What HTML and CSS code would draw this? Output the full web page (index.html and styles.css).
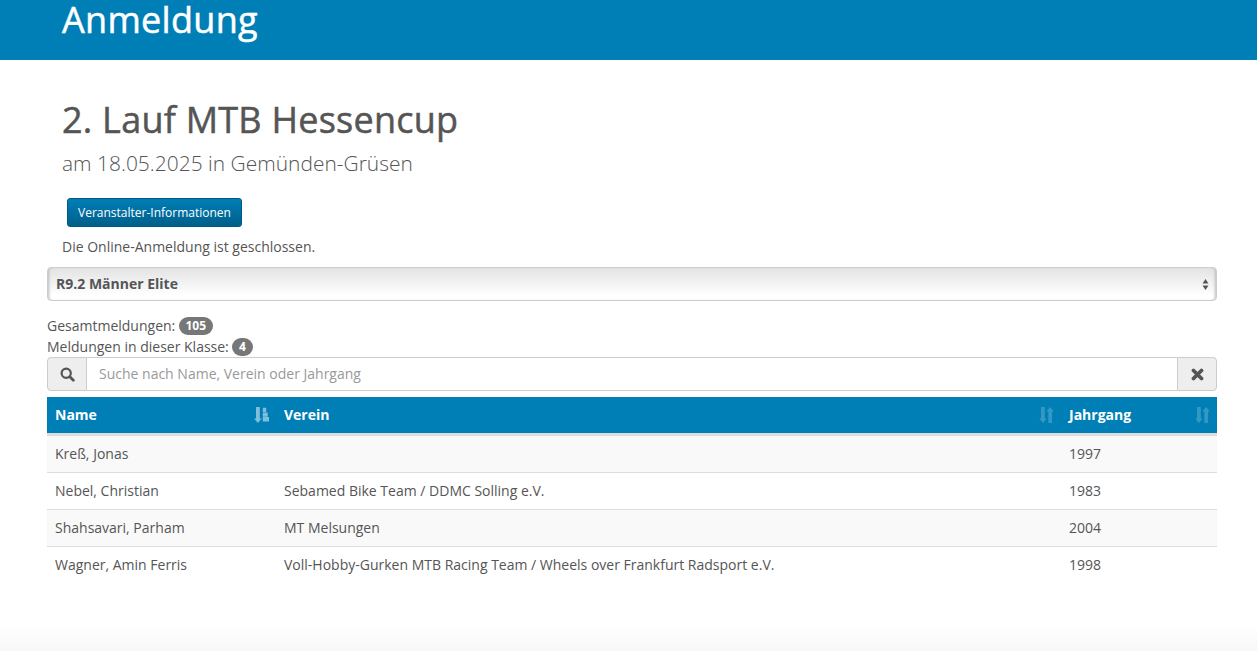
FILE: index.html
```html
<!DOCTYPE html>
<html lang="de">
<head>
<meta charset="utf-8">
<title>Anmeldung</title>
<link rel="stylesheet" href="styles.css">
</head>
<body>
<header class="topbar"><h1 class="topbar-title">Anmeldung</h1></header>
<main class="content">
  <div class="intro">
    <h2 class="event-title">2. Lauf MTB Hessencup</h2>
    <p class="event-sub">am 18.05.2025 in Gemünden-Grüsen</p>
    <a class="btn" href="#">Veranstalter-Informationen</a>
    <p class="closed">Die Online-Anmeldung ist geschlossen.</p>
  </div>
  <div class="select">
    <span>R9.2 Männer Elite</span>
    <svg class="select-arrows" width="7" height="13" viewBox="0 0 7 13"><path d="M3.5 1 6.5 5.500H.5zM.5 7.500h6L3.500 12z" fill="#555"/></svg>
  </div>
  <div class="counts">
    <div class="count-row">Gesamtmeldungen: <span class="badge">105</span></div>
    <div class="count-row">Meldungen in dieser Klasse: <span class="badge">4</span></div>
  </div>
  <div class="search">
    <span class="addon addon-left">
      <svg width="15" height="15" viewBox="0 0 15 15"><circle cx="6.200" cy="6.200" r="4.600" fill="none" stroke="#555" stroke-width="2.200"/><path d="M9.800 9.800 13.300 13.300" stroke="#555" stroke-width="2.800" stroke-linecap="round"/></svg>
    </span>
    <span class="search-input">Suche nach Name, Verein oder Jahrgang</span>
    <span class="addon addon-right">
      <svg width="13" height="13" viewBox="0 0 13 13"><path d="M2.500 2.500 10.500 10.500M10.500 2.500 2.500 10.500" stroke="#555" stroke-width="3.800" stroke-linecap="round"/></svg>
    </span>
  </div>
  <table class="results">
    <colgroup><col class="col-name"><col class="col-club"><col class="col-year"></colgroup>
    <thead>
      <tr>
        <th><div class="th-inner">Name
          <svg class="sort sort-active" width="15" height="16" viewBox="0 0 15 16"><path d="M2 0h3.800v11.500h1.900L3.900 16 .1 11.500H2zM8.800.8h3.400v4.200H8.800zM8.800 5.400h4.900v4.300H8.800zM8.800 10.100H15v4.400H8.800z"/></svg>
        </div></th>
        <th><div class="th-inner">Verein
          <svg class="sort" width="15" height="16" viewBox="0 0 15 16"><path d="M2 0h3.800v11.500h1.900L3.900 16 .1 11.500H2zM11.100 0 15 4.500h-1.900V16H9.300V4.500H7.300z"/></svg>
        </div></th>
        <th><div class="th-inner">Jahrgang
          <svg class="sort" width="15" height="16" viewBox="0 0 15 16"><path d="M2 0h3.800v11.500h1.900L3.900 16 .1 11.500H2zM11.100 0 15 4.500h-1.900V16H9.300V4.500H7.300z"/></svg>
        </div></th>
      </tr>
    </thead>
    <tbody>
      <tr><td>Kreß, Jonas</td><td></td><td>1997</td></tr>
      <tr><td>Nebel, Christian</td><td>Sebamed Bike Team / DDMC Solling e.V.</td><td>1983</td></tr>
      <tr><td>Shahsavari, Parham</td><td>MT Melsungen</td><td>2004</td></tr>
      <tr><td>Wagner, Amin Ferris</td><td>Voll-Hobby-Gurken MTB Racing Team / Wheels over Frankfurt Radsport e.V.</td><td>1998</td></tr>
    </tbody>
  </table>
</main>
<div class="page-fade"></div>
</body>
</html>
```
FILE: styles.css
```css
* { box-sizing: border-box; }
html, body { height: 100%; }
body {
  margin: 0;
  overflow: hidden;
  position: relative;
  background: #fff;
  color: #555;
  font-family: "Open Sans", sans-serif;
  font-size: 14px;
  line-height: 20px;
}
.topbar {
  height: 60px;
  background: #007eb6;
  padding-left: 62px;
}
.topbar-title {
  margin: 0;
  color: #fff;
  font-size: 36px;
  font-weight: 400;
  letter-spacing: .3px;
  line-height: 40px;
  -webkit-text-stroke: .5px #fff;
}
.content { padding: 33px 40px 0 47px; }
.intro { padding-left: 15px; }
.event-title {
  margin: 0;
  font-size: 36px;
  font-weight: 400;
  letter-spacing: .24px;
  line-height: 54px;
  -webkit-text-stroke: .5px #555;
}
.event-sub {
  margin: 0 0 19px;
  font-size: 20.95px;
  font-weight: 300;
  line-height: 32px;
}
.btn {
  display: inline-block;
  height: 29px;
  margin-left: 5px;
  padding: 0 10px;
  border: 1px solid #005b84;
  border-radius: 3px;
  background: linear-gradient(#007eb6, #005f8a);
  color: #fff;
  font-size: 12px;
  line-height: 27px;
  text-decoration: none;
}
.closed { margin: 10px 0 10px; }
.select {
  display: flex;
  align-items: center;
  justify-content: space-between;
  height: 34px;
  padding: 0 8px;
  border: 1px solid #ccc;
  border-radius: 4px;
  background: linear-gradient(#e3e3e3, #fff 85%);
  box-shadow: inset 3px 0 3px -2px #bbb, inset -3px 0 3px -2px #bbb;
  font-weight: 700;
}
.select-arrows { margin-right: -1px; }
.counts { margin-top: 14px; }
.count-row { display: flex; align-items: center; height: 21px; gap: 3.5px; }
.badge {
  display: inline-block;
  min-width: 10px;
  height: 18px;
  padding: 3px 6.7px;
  border-radius: 10px;
  background: #777;
  color: #fff;
  font-size: 12px;
  font-weight: 700;
  line-height: 12px;
}
.search {
  display: flex;
  height: 34px;
}
.addon {
  display: flex;
  align-items: center;
  justify-content: center;
  width: 40px;
  flex: none;
  border: 1px solid #ccc;
  background: #eee;
}
.addon-left { border-radius: 4px 0 0 4px; }
.addon-right { border-radius: 0 4px 4px 0; }
.search-input {
  flex: 1;
  padding: 0 12px;
  border: solid #ccc;
  border-width: 1px 0;
  color: #999;
  line-height: 32px;
}
.results {
  width: 100%;
  margin-top: 6px;
  border-collapse: separate;
  border-spacing: 0;
  table-layout: fixed;
}
.col-name { width: 229px; }
.col-year { width: 156px; }
.results th {
  height: 39px;
  padding: 0 8px;
  border-bottom: 3px solid #ddd;
  background: #007eb6;
  background-clip: padding-box;
  color: #fff;
  font-weight: 700;
  text-align: left;
}
.th-inner {
  display: flex;
  align-items: center;
  justify-content: space-between;
  margin-right: -1px;
}
.sort { fill: #fff; opacity: .2; }
.sort-active { opacity: .5; }
.results td {
  height: 37px;
  padding: 0 8px;
  border-top: 1px solid #ddd;
}
.results tbody tr:first-child td { height: 36px; border-top: 0; }
.results tbody tr:nth-child(odd) { background: #f9f9f9; }
.results tbody tr:last-child { background: #fff; }
.page-fade {
  position: absolute;
  left: 0;
  right: 0;
  bottom: 0;
  height: 25px;
  background: linear-gradient(rgba(245,245,245,0), #f7f7f7);
}
```
